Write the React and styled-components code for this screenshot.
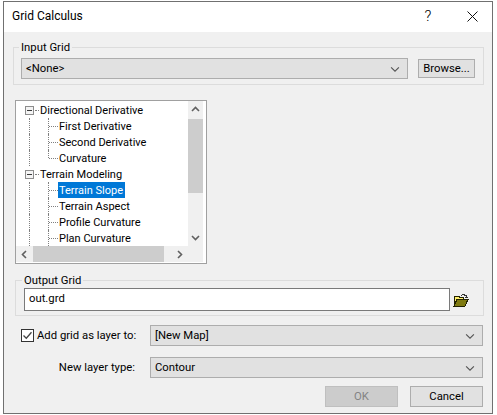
import React from 'react';
import styled, { createGlobalStyle } from 'styled-components';

const GlobalStyle = createGlobalStyle`
  html, body {
    margin: 0;
    padding: 0;
    background: #ffffff;
  }
  body {
    font-family: "Roboto", "Noto Sans", "Liberation Sans", sans-serif;
    font-size: 11.3px;
    color: #000000;
  }
`;

const Dialog = styled.div`
  box-sizing: border-box;
  width: 490px;
  height: 413px;
  margin: 1px 0 0 3px;
  border: 1px solid #707070;
  background: #f0f0f0;
  display: flex;
  flex-direction: column;
`;

const TitleBar = styled.div`
  height: 30px;
  flex: none;
  background: #ffffff;
  display: flex;
  align-items: center;
  padding-left: 8px;
  font-size: 12px;
`;

const Title = styled.div`
  flex: 1;
  margin-top: -2px;
`;

const TitleButton = styled.div`
  box-sizing: border-box;
  width: 44px;
  height: 30px;
  padding-left: 4px;
  display: flex;
  align-items: center;
  justify-content: center;
  font-size: 15px;
  font-weight: 300;
  margin-top: -2px;
`;

const Content = styled.div`
  flex: 1;
  display: flex;
  flex-direction: column;
  padding-top: 7px;
`;

const Group = styled.fieldset`
  box-sizing: border-box;
  margin: ${p => p.$margin};
  padding: ${p => p.$padding};
  height: ${p => p.$height}px;
  border: 1px solid #dcdcdc;
  min-width: 0;
`;

const Legend = styled.legend`
  margin-left: -2px;
  padding: 0 2px;
  height: 16px;
  line-height: 17px;
`;

const Row = styled.div`
  display: flex;
  align-items: center;
  gap: ${p => p.$gap || 0}px;
`;

const ComboBox = styled.div`
  box-sizing: border-box;
  flex: ${p => (p.$width ? 'none' : 1)};
  width: ${p => (p.$width ? `${p.$width}px` : 'auto')};
  height: 21px;
  background: #e1e1e1;
  border: 1px solid #adadad;
  display: flex;
  align-items: center;
  padding: 0 7px 0 4px;
  span {
    flex: 1;
  }
`;

const Button = styled.div`
  box-sizing: border-box;
  width: ${p => p.$width}px;
  height: ${p => p.$height}px;
  flex: none;
  background: ${p => (p.$disabled ? '#cccccc' : '#e1e1e1')};
  border: 1px solid ${p => (p.$disabled ? '#bfbfbf' : '#adadad')};
  color: ${p => (p.$disabled ? '#838383' : '#000000')};
  display: flex;
  align-items: center;
  justify-content: center;
`;

const Tree = styled.div`
  box-sizing: border-box;
  width: 192px;
  height: 164px;
  margin: 15px 0 0 11px;
  border: 1px solid #a0a0a0;
  background: #ffffff;
  display: grid;
  grid-template-columns: 172px 15px;
  grid-template-rows: 145px 16px;
  padding: 0 1px 1px 0;
`;

const TreeList = styled.div`
  overflow: hidden;
  padding-top: 1px;
  font-size: 11px;
`;

const TreeRow = styled.div`
  display: flex;
  height: 16px;
  white-space: nowrap;
`;

const Expander = styled.span`
  box-sizing: border-box;
  position: relative;
  flex: none;
  width: 9px;
  height: 9px;
  margin: 4px 0 0 9px;
  border: 1px solid #8c8c8c;
  background: #f4f4f4;
  &::after {
    content: '';
    position: absolute;
    left: 1px;
    top: 3px;
    width: 5px;
    height: 1px;
    background: #3a3a3a;
  }
`;

const ParentStem = styled.span`
  flex: none;
  width: 4px;
  height: 8px;
  margin: 0 0 0 1px;
  border-bottom: 1px dotted #808080;
`;

const Trunk = styled.span`
  flex: none;
  width: 18px;
  margin-left: 13px;
  border-left: 1px dotted #808080;
`;

const Elbow = styled.span`
  position: relative;
  flex: none;
  width: 10px;
  &::before {
    content: '';
    position: absolute;
    left: 0;
    top: 0;
    height: ${p => (p.$last ? 8 : 16)}px;
    border-left: 1px dotted #808080;
  }
  &::after {
    content: '';
    position: absolute;
    left: 1px;
    right: 0;
    top: 8px;
    border-top: 1px dotted #808080;
  }
`;

const Label = styled.span`
  display: block;
  height: 16px;
  line-height: 17px;
  padding: 0 2px 0 1px;
  background: ${p => (p.$selected ? '#0078d7' : 'transparent')};
  color: ${p => (p.$selected ? '#ffffff' : '#000000')};
`;

const VerticalBar = styled.div`
  background: #f0f0f0;
  display: flex;
  flex-direction: column;
  align-items: center;
`;

const VerticalThumb = styled.div`
  width: 100%;
  height: 74px;
  margin-top: 1px;
  background: #cdcdcd;
`;

const HorizontalBar = styled.div`
  background: #f0f0f0;
  display: flex;
  align-items: center;
`;

const HorizontalThumb = styled.div`
  width: 131px;
  height: 100%;
  background: #cdcdcd;
`;

const ArrowBox = styled.div`
  flex: none;
  width: ${p => (p.$horizontal ? '17px' : '15px')};
  height: ${p => (p.$horizontal ? '16px' : '17px')};
  display: flex;
  align-items: center;
  justify-content: center;
`;

const Spacer = styled.div`
  flex: 1;
`;

const Corner = styled.div`
  background: #f0f0f0;
`;

const TextInput = styled.div`
  box-sizing: border-box;
  width: 426px;
  height: 23px;
  flex: none;
  background: #ffffff;
  border: 1px solid #7a7a7a;
  padding-left: 4px;
  line-height: 20px;
`;

const FolderButton = styled.div`
  display: flex;
`;

const FormGrid = styled.div`
  display: grid;
  grid-template-columns: 129px 333px;
  row-gap: 11px;
  margin: 9px 0 0 17px;
  align-items: center;
`;

const CheckField = styled.label`
  display: flex;
  align-items: center;
  gap: 3px;
`;

const CheckBox = styled.span`
  box-sizing: border-box;
  width: 13px;
  height: 13px;
  border: 1px solid #333333;
  background: #ffffff;
  display: flex;
  align-items: center;
  justify-content: center;
`;

const FieldLabel = styled.div`
  text-align: right;
  padding-right: 15px;
`;

const Footer = styled.div`
  display: flex;
  justify-content: flex-end;
  gap: 12px;
  margin: 8px 9px 0 0;
`;

const Chevron = ({ dir = 'down', color = '#606060', w = 1.6, size = 9 }) => {
  const paths = {
    down: 'M1 3l3.5 3.5L8 3',
    up: 'M1 6l3.5-3.5L8 6',
    left: 'M6 1L2.5 4.5 6 8',
    right: 'M3 1l3.5 3.5L3 8',
  };
  return (
    <svg width={size} height={size} viewBox="0 0 9 9" fill="none">
      <path d={paths[dir]} stroke={color} strokeWidth={w} />
    </svg>
  );
};

const ComboArrow = () => <Chevron color="#555555" w={1} size={10} />;

const CloseIcon = () => (
  <svg width="11" height="11" viewBox="0 0 11 11" fill="none">
    <path d="M.5.5l10 10M10.5.5l-10 10" stroke="#111111" strokeWidth="1" />
  </svg>
);

const CheckMark = () => (
  <svg width="11" height="11" viewBox="0 0 11 11" fill="none">
    <path d="M1.5 5.5l2.8 2.8 5.2-6" stroke="#444444" strokeWidth="1.3" />
  </svg>
);

const FolderIcon = () => (
  <svg width="16" height="16" viewBox="0 0 16 16" shapeRendering="crispEdges">
    <path d="M1 4.5h5v1h4v2H4l-3 6z" fill="#ffef6b" stroke="#222200" strokeWidth="1" />
    <path d="M1 14l3-6.5h11L12 14z" fill="#7f7a10" stroke="#222200" strokeWidth="1" />
    <path d="M8 3h1V2h3v1h2v2h1v1h-3V5h1V4h-2V3H9v1H8z" fill="#333333" />
  </svg>
);

const treeRows = [
  { name: 'Directional Derivative', parent: true },
  { name: 'First Derivative' },
  { name: 'Second Derivative' },
  { name: 'Curvature', last: true },
  { name: 'Terrain Modeling', parent: true },
  { name: 'Terrain Slope', selected: true },
  { name: 'Terrain Aspect' },
  { name: 'Profile Curvature' },
  { name: 'Plan Curvature' },
];

const TreeItem = ({ row }) =>
  row.parent ? (
    <TreeRow>
      <Expander />
      <ParentStem />
      <Label>{row.name}</Label>
    </TreeRow>
  ) : (
    <TreeRow>
      <Trunk />
      <Elbow $last={row.last} />
      <Label $selected={row.selected}>{row.name}</Label>
    </TreeRow>
  );

export default function App() {
  return (
    <>
      <GlobalStyle />
      <Dialog>
        <TitleBar>
          <Title>Grid Calculus</Title>
          <TitleButton>?</TitleButton>
          <TitleButton>
            <CloseIcon />
          </TitleButton>
        </TitleBar>
        <Content>
          <Group $margin="0 8px 0 9px" $padding="3px 7px 0 7px" $height={46}>
            <Legend>Input Grid</Legend>
            <Row $gap={10}>
              <ComboBox $width={387}>
                <span>&lt;None&gt;</span>
                <ComboArrow />
              </ComboBox>
              <Button $width={57} $height={19}>
                Browse...
              </Button>
            </Row>
          </Group>

          <Tree>
            <TreeList>
              {treeRows.map(row => (
                <TreeItem key={row.name} row={row} />
              ))}
            </TreeList>
            <VerticalBar>
              <ArrowBox>
                <Chevron dir="up" />
              </ArrowBox>
              <VerticalThumb />
              <Spacer />
              <ArrowBox>
                <Chevron dir="down" />
              </ArrowBox>
            </VerticalBar>
            <HorizontalBar>
              <ArrowBox $horizontal>
                <Chevron dir="left" />
              </ArrowBox>
              <HorizontalThumb />
              <Spacer />
              <ArrowBox $horizontal>
                <Chevron dir="right" />
              </ArrowBox>
            </HorizontalBar>
            <Corner />
          </Tree>

          <Group $margin="8px 8px 0 11px" $padding="0 8px" $height={44}>
            <Legend>Output Grid</Legend>
            <Row $gap={3}>
              <TextInput>out.grd</TextInput>
              <FolderButton>
                <FolderIcon />
              </FolderButton>
            </Row>
          </Group>

          <FormGrid>
            <CheckField>
              <CheckBox>
                <CheckMark />
              </CheckBox>
              Add grid as layer to:
            </CheckField>
            <ComboBox>
              <span>[New Map]</span>
              <ComboArrow />
            </ComboBox>
            <FieldLabel>New layer type:</FieldLabel>
            <ComboBox>
              <span>Contour</span>
              <ComboArrow />
            </ComboBox>
          </FormGrid>

          <Footer>
            <Button $width={73} $height={21} $disabled>
              OK
            </Button>
            <Button $width={73} $height={21}>
              Cancel
            </Button>
          </Footer>
        </Content>
      </Dialog>
    </>
  );
}
